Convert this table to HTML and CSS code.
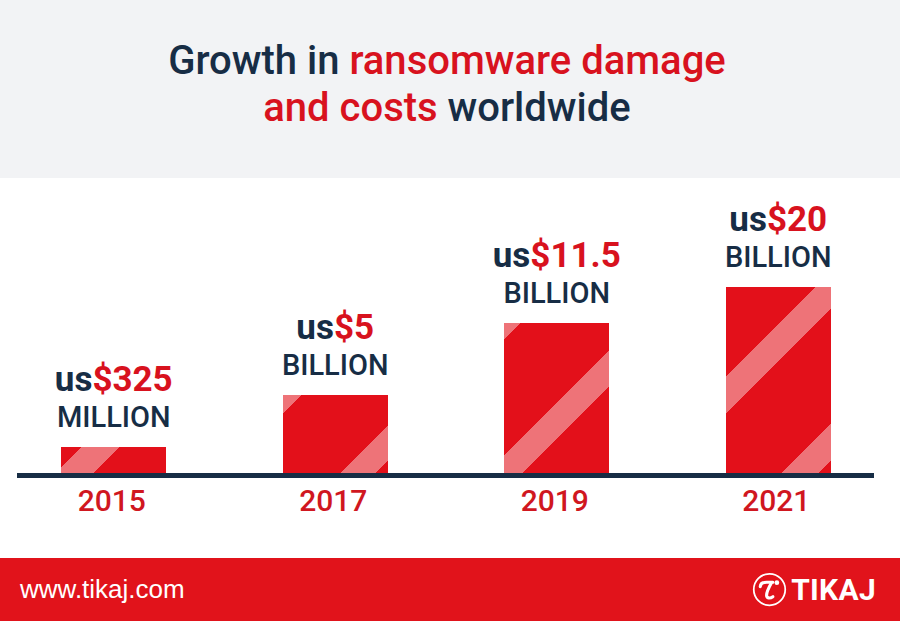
FILE: index.html
```html
<!DOCTYPE html>
<html lang="en">
<head>
<meta charset="utf-8">
<title>Growth in ransomware damage and costs worldwide</title>
<link rel="stylesheet" href="styles.css">
</head>
<body>
<div class="page">
  <header class="header">
    <h1 class="title">Growth in <span class="red">ransomware damage</span><br><span class="red">and costs</span> worldwide</h1>
  </header>
  <main class="chart">
    <div class="plot">
      <div class="col">
        <div class="label"><div class="amount"><span class="cur">us</span>$325</div><div class="unit">MILLION</div></div>
        <div class="bar bar-2015" style="height:26px"></div>
      </div>
      <div class="col">
        <div class="label"><div class="amount"><span class="cur">us</span>$5</div><div class="unit">BILLION</div></div>
        <div class="bar bar-2017" style="height:78px"></div>
      </div>
      <div class="col">
        <div class="label"><div class="amount"><span class="cur">us</span>$11.5</div><div class="unit">BILLION</div></div>
        <div class="bar bar-2019" style="height:150px"></div>
      </div>
      <div class="col">
        <div class="label"><div class="amount"><span class="cur">us</span>$20</div><div class="unit">BILLION</div></div>
        <div class="bar bar-2021" style="height:186px"></div>
      </div>
    </div>
    <div class="axis"></div>
    <div class="years">
      <div class="year">2015</div>
      <div class="year">2017</div>
      <div class="year">2019</div>
      <div class="year">2021</div>
    </div>
  </main>
  <footer class="footer">
    <span class="site">www.tikaj.com</span>
    <span class="brand">
      <svg class="logo" width="35" height="35" viewBox="0 0 36 36" aria-hidden="true">
        <circle cx="18" cy="18" r="16.2" fill="none" stroke="#fff" stroke-width="1.8"/>
        <path d="M8.5 15 C8.8 11.5 12 10.3 16 10.5 L21.5 10.6" fill="none" stroke="#fff" stroke-width="3.2" stroke-linecap="round"/>
        <path d="M20 11 C17.5 15.5 15 20.5 15 23.8 C15 27 18.3 27.6 21.5 25.4" fill="none" stroke="#fff" stroke-width="3.2" stroke-linecap="round"/>
        <circle cx="25.6" cy="11" r="2.4" fill="#fff"/>
      </svg>
      <span class="brand-name">TIKAJ</span>
    </span>
  </footer>
</div>
</body>
</html>
```
FILE: styles.css
```css
* { box-sizing: border-box; }
html, body { margin: 0; padding: 0; }
body {
  font-family: Roboto, "Noto Sans", "Liberation Sans", sans-serif;
  color: #172d45;
  background: #fff;
}
.page {
  width: 900px;
  height: 621px;
  display: flex;
  flex-direction: column;
  overflow: hidden;
}
.header {
  height: 178px;
  background: #f2f3f5;
  padding-top: 37px;
}
.title {
  margin: 0;
  text-align: center;
  font-size: 40px;
  line-height: 47px;
  font-weight: 500;
  color: #172d45;
  padding-right: 6px;
}
.red { color: #d8121e; }

.chart {
  height: 380px;
  display: flex;
  flex-direction: column;
}
.plot {
  height: 295px;
  display: grid;
  grid-template-columns: repeat(4, 221.5px);
  margin-left: 3px;
  align-items: end;
}
.col {
  display: flex;
  flex-direction: column;
  align-items: center;
}
.label {
  text-align: center;
  margin-bottom: 12px;
}
.amount {
  font-size: 35px;
  line-height: 38px;
  font-weight: 700;
  color: #d8121e;
}
.cur { color: #172d45; }
.unit {
  font-size: 29px;
  line-height: 36px;
  font-weight: 500;
  color: #172d45;
}
.bar {
  width: 105px;
  background-color: #e3101a;
}
.bar-2015 {
  background-image: repeating-linear-gradient(135deg, #e3101a 0 14.8px, #ee7378 14.8px 41.7px, #e3101a 41.7px 107.5px);
}
.bar-2017 {
  background-image: repeating-linear-gradient(135deg, #ee7378 0 13.4px, #e3101a 13.4px 95.5px, #ee7378 95.5px 107.5px);
}
.bar-2019 {
  background-image: repeating-linear-gradient(135deg, #ee7378 0 12px, #e3101a 12px 94px, #ee7378 94px 107.5px);
}
.bar-2021 {
  background-image: repeating-linear-gradient(135deg, #e3101a 0 63.6px, #ee7378 63.6px 89.1px, #e3101a 89.1px 107.5px);
}
.axis {
  height: 5px;
  width: 857px;
  margin-left: 17px;
  background: #172d45;
}
.years {
  display: grid;
  grid-template-columns: repeat(4, 221.5px);
  margin-left: 1px;
  padding-top: 6px;
}
.year {
  text-align: center;
  font-size: 30px;
  line-height: 34px;
  font-weight: 500;
  color: #d0171f;
}

.footer {
  flex: 1;
  background: #e1131b;
  display: flex;
  align-items: center;
  justify-content: space-between;
  padding: 0 24px 0 20px;
  color: #fff;
}
.site {
  font-family: "Liberation Sans", Arial, sans-serif;
  font-size: 26px;
  line-height: 30px;
  padding-bottom: 2px;
}
.brand {
  display: flex;
  align-items: center;
  gap: 4px;
}
.logo { display: block; }
.brand-name {
  font-size: 30px;
  font-weight: 700;
  line-height: 32px;
  letter-spacing: 0.3px;
}
```
